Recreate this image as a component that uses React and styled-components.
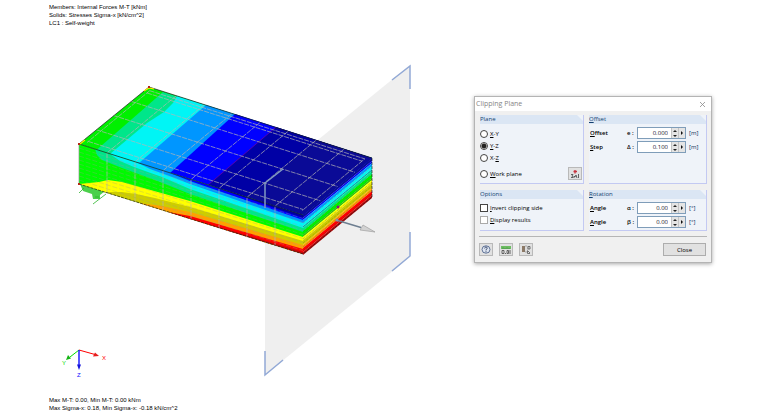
import { useState } from 'react';
import styled, { createGlobalStyle } from 'styled-components';

const GlobalStyle = createGlobalStyle`
  * {
    box-sizing: border-box;
  }
  body {
    margin: 0;
    background: #fff;
  }
`;

const Page = styled.div`
  display: flex;
  align-items: flex-start;
  padding-right: 48px;
  font-family: "Open Sans", "Noto Sans", sans-serif;
  font-size: 6px;
  line-height: 8px;
  color: #000;
`;

const Viewport = styled.main`
  flex: 1;
  min-width: 0;
  padding-top: 3px;
`;

const Caption = styled.p`
  margin: 0;
  padding-left: 49px;
  font: 6px/8px "Liberation Sans", Arial, sans-serif;
  color: #000;
`;

const Drawing = styled.svg`
  display: block;
  width: 100%;
`;

const Dialog = styled.section`
  width: 238px;
  margin-top: 96px;
  background: #f0f0f0;
  border: 1px solid #b4b4b4;
  box-shadow: 0 1px 4px rgba(0, 0, 0, 0.35);
`;

const TitleBar = styled.header`
  display: flex;
  align-items: center;
  justify-content: space-between;
  height: 14px;
  padding: 0 5px 0 1px;
  background: #fff;
`;

const Title = styled.h1`
  margin: 0;
  font-size: 7px;
  font-weight: 400;
  color: #858585;
`;

const CloseIcon = styled.button`
  display: flex;
  padding: 0;
  border: 0;
  background: none;
`;

const Body = styled.div`
  display: grid;
  grid-template-columns: 104px 1fr;
  grid-template-rows: 69px 41px;
  gap: 6px 5px;
  padding: 4px 4px 0 5px;
`;

const Group = styled.fieldset`
  display: flex;
  flex-direction: column;
  min-width: 0;
  margin: 0;
  padding: 0;
  background: #eff3f9;
  border: 0;
  border-right: 1px solid #c3c9f2;
  border-bottom: 1px solid #c3c9f2;
`;

const GroupTitle = styled.legend`
  float: left;
  width: 100%;
  height: 9px;
  padding: 0;
  line-height: 9px;
  color: #123f70;
  background: #dbe6f4;
  clip-path: polygon(0 0, calc(100% - 6px) 0, 100% 6px, 100% 100%, 0 100%);
`;

const Choices = styled.div`
  display: flex;
  flex-direction: column;
  padding: ${({ $top }) => $top}px 1px 0 0;
`;

const Choice = styled.label`
  display: flex;
  align-items: center;
  gap: 2px;
  height: 12px;
`;

const Split = styled.div`
  display: flex;
  align-items: center;
  justify-content: space-between;
  margin-top: 3px;
`;

const Radio = styled.input.attrs({ type: 'radio' })`
  appearance: none;
  width: 8px;
  height: 8px;
  margin: 0;
  border: 1px solid #444;
  border-radius: 50%;
  background: #fff;
  &:checked {
    background: radial-gradient(circle, #222 0 2px, #fff 3px);
  }
`;

const Checkbox = styled.input.attrs({ type: 'checkbox' })`
  appearance: none;
  width: 8px;
  height: 8px;
  margin: 0;
  border: 1px solid ${({ $soft }) => ($soft ? '#aaa' : '#444')};
  background: #fff;
  &:checked {
    background: #444;
  }
`;

const ToolButton = styled.button`
  display: flex;
  align-items: center;
  justify-content: center;
  width: 14px;
  height: 13px;
  padding: 0;
  border: 1px solid #b9b9b9;
  background: #e1e1e1;
`;

const Fields = styled.div`
  display: flex;
  flex-direction: column;
  gap: 2px;
  padding: 3px 1px 0;
`;

const FieldRow = styled.div`
  display: grid;
  grid-template-columns: 37px 10px 49px auto;
  align-items: center;
  height: 12px;
`;

const FieldLabel = styled.label`
  font-weight: 600;
`;

const Symbol = styled.span`
  font-weight: 600;
`;

const Unit = styled.span`
  padding-left: 3px;
  color: #14305c;
`;

const SpinBox = styled.div`
  display: flex;
  height: 12px;
  border: 1px solid #7f9db9;
  background: #fff;
`;

const Value = styled.input`
  flex: 1;
  min-width: 0;
  padding: 0 3px 0 0;
  border: 0;
  outline: 0;
  background: none;
  color: #20102c;
  font: inherit;
  text-align: right;
`;

const Stepper = styled.div`
  display: grid;
  grid-template-rows: 5px 5px;
  width: 7px;
`;

const StepButton = styled.button`
  display: flex;
  align-items: center;
  justify-content: center;
  min-width: 0;
  padding: 0;
  border: 0;
  border-left: 1px solid #c4c4c4;
  background: #e4e4e4;
  width: 7px;
`;

const Footer = styled.footer`
  display: flex;
  gap: 6px;
  margin: 5px 4px 0 4px;
  padding: 6px 1px 6px 0;
  border-top: 1px solid #b5b5b5;
`;

const CloseButton = styled.button`
  width: 43px;
  height: 13px;
  margin-left: auto;
  padding: 0;
  border: 1px solid #adadad;
  background: #e1e1e1;
  color: #000;
  font: inherit;
`;

// Corners of the solid: near left, near right; depth runs up and to the right
const LEFT = [79, 144];
const LENGTH = [224, 71];
const DEPTH = [69, -57];
const HEIGHT = 40;

const at = (u, v, h = 0) => [
  LEFT[0] + u * LENGTH[0] + v * DEPTH[0],
  LEFT[1] + u * LENGTH[1] + v * DEPTH[1] + h,
];
const path = (...pts) => `M${pts.map((p) => p.join(' ')).join('L')}`;

const TOP_BANDS = [
  { color: '#00e68a', d: 'M163 92L97 149.500L303 215L372 158Z' },
  { color: '#00f5f5', d: 'M177 96L173 103L164 112L147 123L110 154L303 215L372 158Z' },
  { color: '#0096ff', d: 'M206 105L139 163L303 215L372 158Z' },
  { color: '#0000ff', d: 'M235 114L170 173L303 215L372 158Z' },
  { color: '#0000a5', d: 'M276 127L208 185L303 215L372 158Z' },
  { color: '#0a0a96', d: 'M316 140L246 197L303 215L372 158Z' },
];

// Front face, painted from the top layer down; each band covers what lies below its upper edge
const FRONT_UPPER = [
  { color: '#00e68a', d: 'M95 149L97 155L102 160L122 168L155 180L190 194L303 232V215Z' },
  { color: '#00f5f5', d: 'M110 154L120 161L134 167L162 177L190 189L303 228V215Z' },
  { color: '#0096ff', d: 'M135 161.500L150 169L172 177L190 184L303 223V215Z' },
  { color: '#0000ff', d: 'M170 173L190 181L303 220V215Z' },
  { color: '#0000a0', d: 'M206 184L303 218V215Z' },
];
const FRONT_LOWER = [
  { color: '#ffff00', d: 'M79 184L99 182L108 180L122 182L172 196L190 201L303 237V254Z' },
  { color: '#cdcd00', d: 'M104 192L122 192L136 194L155 198L190 207L303 241V254Z' },
  { color: '#ffa000', d: 'M139 203L162 206L190 212L303 245V254Z' },
  { color: '#ff0000', d: 'M168 212L190 216L303 249V254Z' },
  { color: '#be0a0a', d: 'M205 223L303 252V254Z' },
];

const END_BANDS = [
  ['#0a0a96', 0, 3],
  ['#0000ff', 3, 5],
  ['#0096ff', 5, 8],
  ['#00f5f5', 8, 11],
  ['#00c8c8', 11, 13],
  ['#00e68a', 13, 16],
  ['#00f000', 16, 20],
  ['#32cd00', 20, 22],
  ['#ffff00', 22, 25],
  ['#cdcd00', 25, 30],
  ['#ffa000', 30, 33],
  ['#ff0000', 33, 37],
  ['#be0a0a', 37, 40],
];

const EIGHTHS = [1, 2, 3, 4, 5, 6, 7].map((n) => n / 8);
const LAYERS = [4, 8, 12, 16, 20, 24, 28, 32, 36];

const ClipPlane = () => (
  <g fill="none" stroke="#92a9d6" strokeWidth="1.500">
    <path d="M410 65V257L265 375V183Z" fill="#efefef" stroke="none" />
    <path d="M392 80L410 66V89M410 232V256L392 271M265 351V375L283 360" />
  </g>
);

const Supports = () => (
  <g fill="#4bd04b" stroke="#28b428" strokeWidth="1">
    <path d="M80 184L92 187L104 192L100 195V199L93 199L92 194L83 191Z" stroke="none" />
    <path d="M84 188L79 193M106 194L93 204M95 197H99" strokeWidth="0.800" />
  </g>
);

const Solid = () => (
  <g>
    <path d="M79 144L149 87L372 158L303 215Z" fill="#00f000" />
    {TOP_BANDS.map((b) => (
      <path key={b.color} d={b.d} fill={b.color} />
    ))}
    <path d="M276 127L208 185" stroke="#7800a0" strokeWidth="0.700" />
    <path d="M79 144L303 215V254L79 184Z" fill="#00fa00" />
    {[...FRONT_UPPER, ...FRONT_LOWER].map((b) => (
      <path key={b.color} d={b.d} fill={b.color} />
    ))}
    {END_BANDS.map(([color, from, to]) => (
      <path
        key={color + from}
        d={`${path([303, 215 + from], [372, 158 + from], [372, 158 + to], [303, 215 + to])}Z`}
        fill={color}
      />
    ))}

    <g fill="none" stroke="#b4b4b4" strokeWidth="0.700" strokeDasharray="5 1">
      {EIGHTHS.map((u) => (
        <path key={u} d={path(at(u, 1), at(u, 0), at(u, 0, HEIGHT))} />
      ))}
      {[0.25, 0.5, 0.75].map((v) => (
        <path key={v} d={path(at(0, v), at(1, v))} />
      ))}
      <path d={path(at(0.02, 0.07), at(0.98, 0.07))} />
      <path d={path(at(0.02, 0.96), at(0.98, 0.96), at(0.98, 0.05))} />
      <path d={path(at(0.02, 0.92), at(0.98, 0.92))} />
      <path d={path(at(0.02, 0.96), at(0.02, 0.05))} />
    </g>
    <g fill="none" stroke="#a0a08c" strokeWidth="0.400" strokeDasharray="5 2" opacity="0.800">
      {LAYERS.map((h) => (
        <path key={h} d={path(at(0, 0, h), at(1, 0, h - 0.5))} />
      ))}
    </g>
    <g fill="none" stroke="#222" strokeWidth="0.400" strokeDasharray="3 1" opacity="0.500">
      {LAYERS.map((h) => (
        <path key={h} d={path(at(1, 0, h), at(1, 1, h))} />
      ))}
    </g>
    <g fill="none" stroke="#1c1c1c" strokeWidth="0.700">
      <path d="M79 144L149 87L372 158M79 144L303 215" />
      <path d="M79 184L303 254L372 197V158" strokeDasharray="3 1" />
      <path d="M79 144V184" stroke="#8c968c" />
    </g>
    <path d="M80 144L85 140M144 91L149 88L154 89" stroke="#ffe600" strokeWidth="1.200" fill="none" />
    <path d="M78 143h2v2h-2zM148 86h2v2h-2zM78 183h2v2h-2z" fill="#b42814" />
    <path d="M283 169L265 183V208" fill="none" stroke="#819ac4" strokeWidth="1.500" />
  </g>
);

const Normal = () => (
  <g>
    <circle cx="338" cy="207" r="1.500" fill="#8c1482" />
    <path d="M336 220L361 227.500" stroke="#6e7f91" strokeWidth="1.500" />
    <circle cx="337" cy="220" r="1.500" fill="#8296aa" />
    <path d="M363 225L375 232L360 230Z" fill="#d2d2d2" stroke="#969696" strokeWidth="0.600" />
  </g>
);

const Axes = () => (
  <g strokeWidth="1" fontFamily="Liberation Sans, Arial, sans-serif" fontSize="6">
    <path d="M79 350L95 354.500" stroke="#f00" />
    <path d="M99 356L93 356.500L95 352.500Z" fill="#e61e1e" />
    <path d="M79 350L70 357" stroke="#0d0" />
    <path d="M66 360L68 355L71 358.500Z" fill="#14b414" />
    <path d="M79 350V366" stroke="#11f" strokeWidth="1.400" />
    <path d="M79 370L77 364.500H81Z" fill="#1414dc" />
    <text x="102" y="360" fill="#f00">X</text>
    <text x="62" y="365" fill="#0d0">Y</text>
    <text x="77" y="377" fill="#11f">Z</text>
  </g>
);

const ModelView = () => (
  <Drawing viewBox="0 27 474 369" role="img" aria-label="Solid stresses with clipping plane">
    <ClipPlane />
    <Supports />
    <Solid />
    <Normal />
    <Axes />
  </Drawing>
);

const PickIcon = () => (
  <svg width="10" height="10" viewBox="0 0 10 10" fill="none" stroke="#444" strokeWidth="0.800">
    <path d="M1 5.500H3L2 7L3 8.500H1M4 9V7L5 8L6 6L7 9M8.500 5V9" />
    <path d="M5 1V4.500M3.500 2.500H7" stroke="#c8323c" strokeWidth="1.300" />
  </svg>
);

const HelpIcon = () => (
  <svg width="10" height="9" viewBox="0 0 10 9" fill="none">
    <ellipse cx="5" cy="4.500" rx="4" ry="3.700" fill="#dfe6f2" stroke="#52678c" strokeWidth="0.900" />
    <path d="M3.700 3.400C3.700 1.600 6.300 1.700 6.200 3.300C6.100 4.200 5 4.100 5 5.400M5 6.300V7.200" stroke="#2c3c60" strokeWidth="1" />
  </svg>
);

const UnitsIcon = () => (
  <svg width="10" height="10" viewBox="0 0 10 10" fill="none">
    <path d="M0 1H10V4H0Z" fill="#6cbc62" />
    <path d="M2 4V2.500M4 4V3M6 4V2.500M8 4V3" stroke="#317431" strokeWidth="0.600" />
    <path d="M1 5.500H3V8.500H1ZM4.500 8V9M6 5.500H7.500V8.500H6ZM9 5V9" stroke="#444" strokeWidth="0.800" />
  </svg>
);

const ViewIcon = () => (
  <svg width="10" height="10" viewBox="0 0 10 10" fill="none">
    <path d="M1 1H4V7H1Z" fill="#8d7965" />
    <path d="M4 1H6V7H4Z" fill="#fff" stroke="#777" strokeWidth="0.500" />
    <path d="M7 1.500H9V4H7ZM6.500 5.500V8.500H9M7 6L9 8" stroke="#555" strokeWidth="0.800" />
  </svg>
);

const Field = ({ id, label, symbol, unit, initial, digits, step }) => {
  const [value, setValue] = useState(initial);
  const move = (delta) => setValue((Number(value) + delta).toFixed(digits));

  return (
    <FieldRow>
      <FieldLabel htmlFor={id}><u>{label[0]}</u>{label.slice(1)}</FieldLabel>
      <Symbol>{symbol} :</Symbol>
      <SpinBox>
        <Value id={id} value={value} onChange={(e) => setValue(e.target.value)} />
        <Stepper>
          <StepButton aria-label="Increase" onClick={() => move(step)}>
            <svg width="4" height="2" viewBox="0 0 4 2"><path d="M0 2L2 0L4 2Z" fill="#222" /></svg>
          </StepButton>
          <StepButton aria-label="Decrease" onClick={() => move(-step)}>
            <svg width="4" height="2" viewBox="0 0 4 2"><path d="M0 0L2 2L4 0Z" fill="#222" /></svg>
          </StepButton>
        </Stepper>
        <StepButton aria-label="More values">
          <svg width="2" height="4" viewBox="0 0 2 4"><path d="M0 0L2 2L0 4Z" fill="#111" /></svg>
        </StepButton>
      </SpinBox>
      <Unit>[{unit}]</Unit>
    </FieldRow>
  );
};

const ClippingDialog = () => {
  const [plane, setPlane] = useState('yz');
  const radio = (id) => ({
    name: 'plane',
    checked: plane === id,
    onChange: () => setPlane(id),
  });

  return (
    <Dialog role="dialog" aria-label="Clipping Plane">
      <TitleBar>
        <Title>Clipping Plane</Title>
        <CloseIcon aria-label="Close window">
          <svg width="7" height="7" viewBox="0 0 7 7" stroke="#8c8c8c" strokeWidth="0.800">
            <path d="M1 1L6 6M6 1L1 6" />
          </svg>
        </CloseIcon>
      </TitleBar>
      <Body>
        <Group>
          <GroupTitle>Plane</GroupTitle>
          <Choices $top={4}>
            <Choice><Radio {...radio('xy')} /><span><u>X</u>-Y</span></Choice>
            <Choice><Radio {...radio('yz')} /><span><u>Y</u>-Z</span></Choice>
            <Choice><Radio {...radio('xz')} /><span>X-<u>Z</u></span></Choice>
            <Split>
              <Choice><Radio {...radio('work')} /><span><u>W</u>ork plane</span></Choice>
              <ToolButton aria-label="Pick work plane"><PickIcon /></ToolButton>
            </Split>
          </Choices>
        </Group>
        <Group>
          <GroupTitle><u>O</u>ffset</GroupTitle>
          <Fields>
            <Field id="offset" label="Offset" symbol="e" unit="m" initial="0.000" digits={3} step={0.1} />
            <Field id="step" label="Step" symbol="Δ" unit="m" initial="0.100" digits={3} step={0.1} />
          </Fields>
        </Group>
        <Group>
          <GroupTitle>Options</GroupTitle>
          <Choices $top={3}>
            <Choice><Checkbox /><span><u>I</u>nvert clipping side</span></Choice>
            <Choice><Checkbox $soft /><span><u>D</u>isplay results</span></Choice>
          </Choices>
        </Group>
        <Group>
          <GroupTitle><u>R</u>otation</GroupTitle>
          <Fields>
            <Field id="alpha" label="Angle" symbol="α" unit="°" initial="0.00" digits={2} step={1} />
            <Field id="beta" label="Angle" symbol="β" unit="°" initial="0.00" digits={2} step={1} />
          </Fields>
        </Group>
      </Body>
      <Footer>
        <ToolButton aria-label="Help"><HelpIcon /></ToolButton>
        <ToolButton aria-label="Units and decimals"><UnitsIcon /></ToolButton>
        <ToolButton aria-label="View settings"><ViewIcon /></ToolButton>
        <CloseButton>Close</CloseButton>
      </Footer>
    </Dialog>
  );
};

export default function App() {
  return (
    <>
      <GlobalStyle />
      <Page>
        <Viewport>
          <Caption>Members: Internal Forces M-T [kNm]</Caption>
          <Caption>Solids: Stresses Sigma-x [kN/cm^2]</Caption>
          <Caption>LC1 : Self-weight</Caption>
          <ModelView />
          <Caption>Max M-T: 0.00, Min M-T: 0.00 kNm</Caption>
          <Caption>Max Sigma-x: 0.18, Min Sigma-x: -0.18 kN/cm^2</Caption>
        </Viewport>
        <ClippingDialog />
      </Page>
    </>
  );
}
